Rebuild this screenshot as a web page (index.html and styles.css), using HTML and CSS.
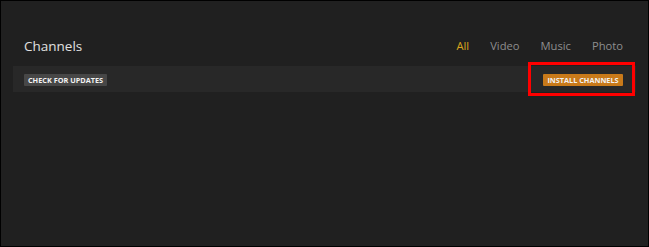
FILE: index.html
```html
<!DOCTYPE html>
<html>
<head>
<meta charset="utf-8">
<link rel="stylesheet" href="styles.css">
</head>
<body>
<div class="frame">
  <div class="header">
    <h1 class="title">Channels</h1>
    <nav class="tabs">
      <span class="tab active">All</span>
      <span class="tab">Video</span>
      <span class="tab">Music</span>
      <span class="tab">Photo</span>
    </nav>
  </div>
  <div class="bar">
    <button class="btn btn-gray">CHECK FOR UPDATES</button>
    <div class="install-wrap">
      <button class="btn btn-orange">INSTALL CHANNELS</button>
      <span class="highlight"></span>
    </div>
  </div>
</div>
</body>
</html>
```
FILE: styles.css
```css
html, body {
  margin: 0;
  padding: 0;
  background: #000;
}
.frame {
  box-sizing: border-box;
  width: 649px;
  height: 247px;
  border: 1px solid #000;
  background: #202020;
  font-family: "Open Sans", "Liberation Sans", sans-serif;
  padding: 0 12px 0 12px;
}
.header {
  display: flex;
  align-items: center;
  justify-content: space-between;
  padding: 33px 13px 0 11px;
  height: 24px;
}
.title {
  margin: 0;
  font-size: 13.5px;
  font-weight: 400;
  color: #e0e0e0;
  line-height: 20px;
}
.tabs {
  display: flex;
  gap: 21px;
  font-size: 11.2px;
  line-height: 20px;
}
.tab {
  color: #8e8e8e;
}
.tab.active {
  color: #d9a41c;
}
.bar {
  margin-top: 8px;
  height: 26px;
  box-sizing: border-box;
  padding: 2px 13px 0 11px;
  background: #282828;
  display: flex;
  align-items: center;
  justify-content: space-between;
}
.btn {
  box-sizing: border-box;
  border: none;
  font-family: "Open Sans", "Liberation Sans", sans-serif;
  font-weight: 700;
  font-size: 7.3px;
  color: #f2f2f2;
  height: 12px;
  line-height: 12px;
  padding: 0;
  text-align: center;
  white-space: nowrap;
  border-radius: 1px;
}
.btn-gray {
  background: #474747;
  width: 83px;
}
.btn-orange {
  background: #c97a1a;
  width: 80px;
}
.install-wrap {
  position: relative;
  display: flex;
}
.highlight {
  position: absolute;
  left: -15px;
  top: -12px;
  right: -12px;
  bottom: -10px;
  border: 3px solid #ff0000;
}
```
